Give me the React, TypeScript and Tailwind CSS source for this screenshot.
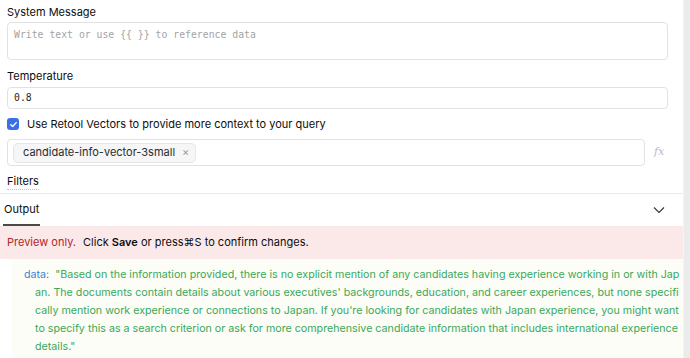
import React from "react";

// Result lines, wrapped where the preview panel breaks them
const resultLines = [
  "an. The documents contain details about various executives' backgrounds, education, and career experiences, but none specifi",
  "cally mention work experience or connections to Japan. If you're looking for candidates with Japan experience, you might want",
  "to specify this as a search criterion or ask for more comprehensive candidate information that includes international experience",
  'details."',
];

const FieldLabel: React.FC<{ children: React.ReactNode }> = ({ children }) => (
  <div className="h-4 leading-4 text-[11px] text-[#0d0d0d]">{children}</div>
);

const App: React.FC = () => {
  return (
    <div className="flex w-[690px] h-[358px] overflow-hidden bg-white font-['Inter',sans-serif]">
      <main className="flex-1 min-w-0 flex flex-col">
        {/* Query settings */}
        <div className="flex flex-col pl-[7px] pr-[15px] pt-1">
          <FieldLabel>System Message</FieldLabel>
          <div className="mt-[2px] h-[38px] rounded-[4px] border border-[#e2e2e2] px-[6px] pt-[5px] font-['DejaVu_Sans_Mono',monospace] text-[9.8px] leading-[14px] text-[#a3a3a3]">
            Write text or use {"{{ }}"} to reference data
          </div>

          <div className="mt-2">
            <FieldLabel>Temperature</FieldLabel>
          </div>
          <div className="mt-[3px] h-[22px] rounded-[4px] border border-[#e2e2e2] px-[6px] flex items-center font-['DejaVu_Sans_Mono',monospace] text-[9.8px] text-[#1f1f1f]">
            0.8
          </div>

          <label className="mt-[7px] h-4 flex items-center gap-2">
            <span className="w-3 h-3 rounded-[3px] bg-[#3b6fe6] flex items-center justify-center">
              <svg width="9" height="9" viewBox="0 0 10 10" fill="none">
                <path
                  d="M2 5.2 4.1 7.2 8 2.9"
                  stroke="white"
                  strokeWidth="1.6"
                  strokeLinecap="round"
                  strokeLinejoin="round"
                />
              </svg>
            </span>
            <span className="text-[11px] text-[#0d0d0d]">
              Use Retool Vectors to provide more context to your query
            </span>
          </label>

          <div className="mt-[7px] flex items-center gap-[9px]">
            <div className="flex-1 h-[27px] rounded-[4px] border border-[#e2e2e2] flex items-center px-[5px]">
              <span className="h-5 flex items-center gap-[7px] rounded-[5px] border border-[#e6e6e6] bg-[#f6f6f6] pl-[9px] pr-[6px] text-[11px] text-[#2b2b2b]">
                candidate-info-vector-3small
                <span className="text-[11px] text-[#9a9a9a] leading-none">×</span>
              </span>
            </div>
            <span className="w-[14px] font-['DejaVu_Serif',serif] italic text-[11px] text-[#b9b9b9]">
              fx
            </span>
          </div>

          <div className="mt-[7px] h-4 flex items-center">
            <span className="text-[11px] leading-4 text-[#0d0d0d] border-b border-dotted border-[#c4c4c4]">
              Filters
            </span>
          </div>
        </div>

        {/* Output tab */}
        <div className="mt-1 border-t border-[#ebebeb] h-[33px] flex items-end justify-between pl-[3px] pr-[18px]">
          <div className="h-full flex flex-col justify-end">
            <span className="flex-1 flex items-center px-[1px] text-[11px] text-[#0d0d0d]">Output</span>
            <span className="h-[2px] w-[37px] bg-[#4a4a4a]" />
          </div>
          <svg className="mb-[12px]" width="12" height="8" viewBox="0 0 12 8" fill="none">
            <path d="M1 1.5 6 6.5 11 1.5" stroke="#333" strokeWidth="1.1" />
          </svg>
        </div>

        {/* Preview banner */}
        <div className="h-[33px] bg-[#fbe9ea] flex items-center px-[7px] text-[11px]">
          <span className="text-[#b3261e]">Preview only.</span>
          <span className="ml-[7px] text-[#0d0d0d]">
            Click <b className="font-semibold">Save</b> or press⌘S to confirm changes.
          </span>
        </div>

        {/* Result */}
        <div className="flex-1 ml-3 bg-[#fdfdf7] pt-[7px] text-[10.7px] leading-[18px] text-[#3aa85b] whitespace-nowrap">
          <div className="pl-3 flex gap-[6px]">
            <span className="text-[#3b84d4]">data:</span>
            <span>
              "Based on the information provided, there is no explicit mention of any candidates having experience working in or with Jap
            </span>
          </div>
          {resultLines.map((line) => (
            <div key={line} className="pl-[23px]">
              {line}
            </div>
          ))}
        </div>
      </main>

      {/* Scrollbar track */}
      <div className="w-[7px] shrink-0 bg-[#ebebeb] border-l border-[#f4f4f4]" />
    </div>
  );
};

export default App;
